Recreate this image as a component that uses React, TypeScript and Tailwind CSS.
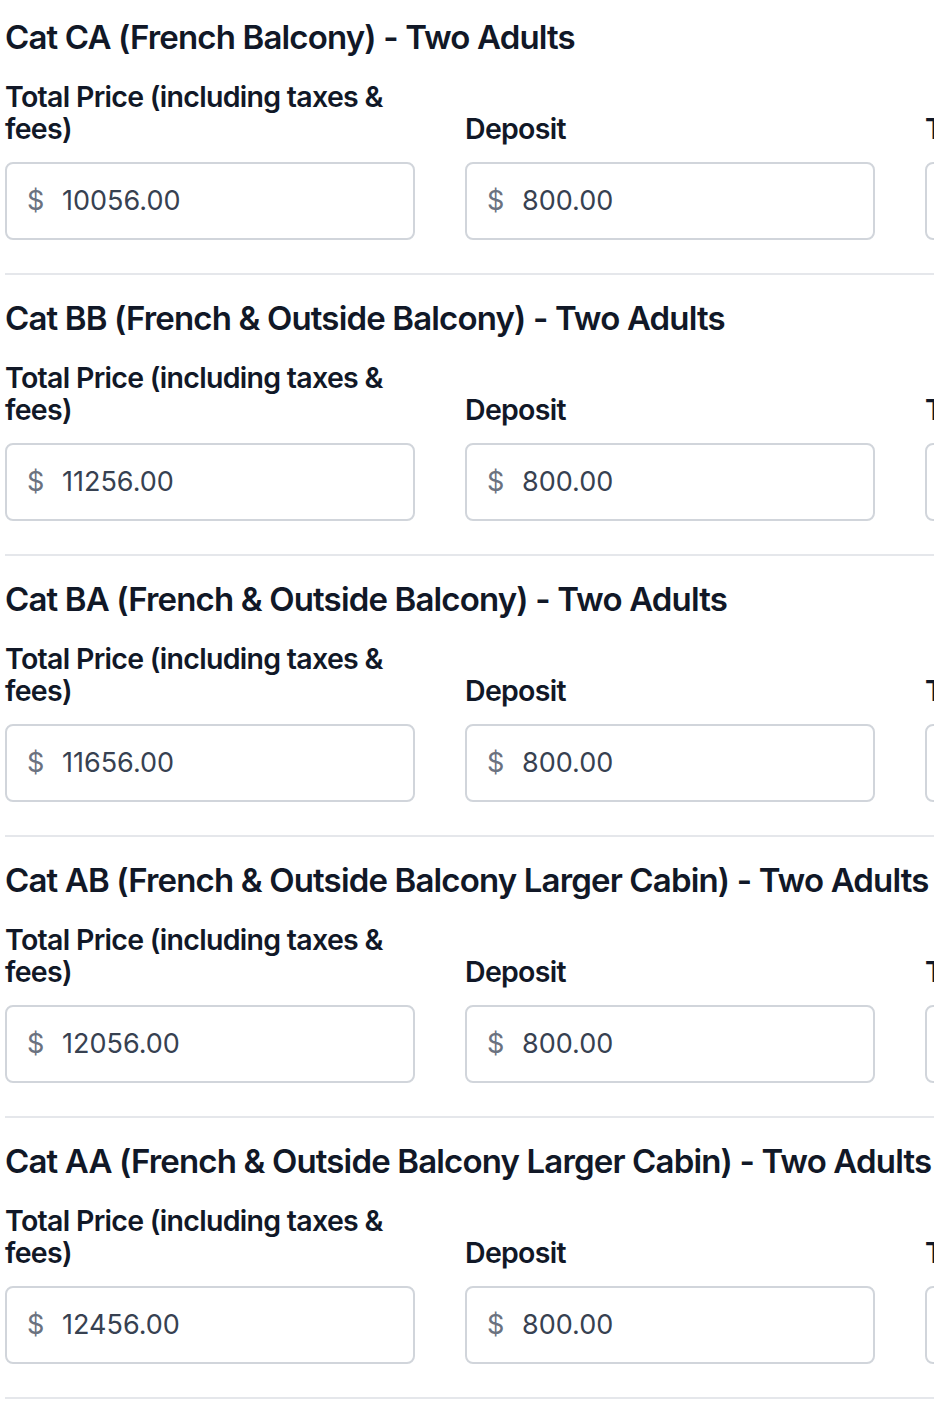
const cabins = [
  { name: "Cat CA (French Balcony) - Two Adults", total: "10056.00" },
  { name: "Cat BB (French & Outside Balcony) - Two Adults", total: "11256.00" },
  { name: "Cat BA (French & Outside Balcony) - Two Adults", total: "11656.00" },
  { name: "Cat AB (French & Outside Balcony Larger Cabin) - Two Adults", total: "12056.00" },
  { name: "Cat AA (French & Outside Balcony Larger Cabin) - Two Adults", total: "12456.00" },
];

function PriceField({ label, value }: { label: string; value: string }) {
  return (
    <div className="flex flex-col">
      <label className="text-[28.5px] leading-[32px] font-semibold text-[#111827] tracking-[-0.7px]">
        {label}
      </label>
      <div className="mt-[17px] h-[78px] flex items-center border-2 border-[#d1d5db] rounded-[8px] bg-white pl-[20px]">
        <span className="text-[27px] text-[#6b7280] w-[35px]">$</span>
        <span className="text-[27px] text-[#374151]">{value}</span>
      </div>
    </div>
  );
}

export default function App() {
  return (
    <div
      className="w-full overflow-hidden bg-white pl-[5px]"
      style={{ fontFamily: "Inter, 'Noto Sans', sans-serif" }}
    >
      {cabins.map((c, i) => (
        <section
          key={c.name}
          className={`border-b-2 border-[#e5e7eb] pb-[33px] ${i === 0 ? "pt-[17px]" : "pt-[23px]"}`}
        >
          <h2 className="text-[33px] leading-[40px] font-semibold text-[#111827] whitespace-nowrap tracking-[-0.85px]">
            {c.name}
          </h2>
          <div className="mt-[24px] grid grid-cols-[410px_410px_410px] gap-x-[50px] items-end">
            <PriceField label="Total Price (including taxes & fees)" value={c.total} />
            <PriceField label="Deposit" value="800.00" />
            <PriceField label="Taxes & Fees" value="0.00" />
          </div>
        </section>
      ))}
    </div>
  );
}
